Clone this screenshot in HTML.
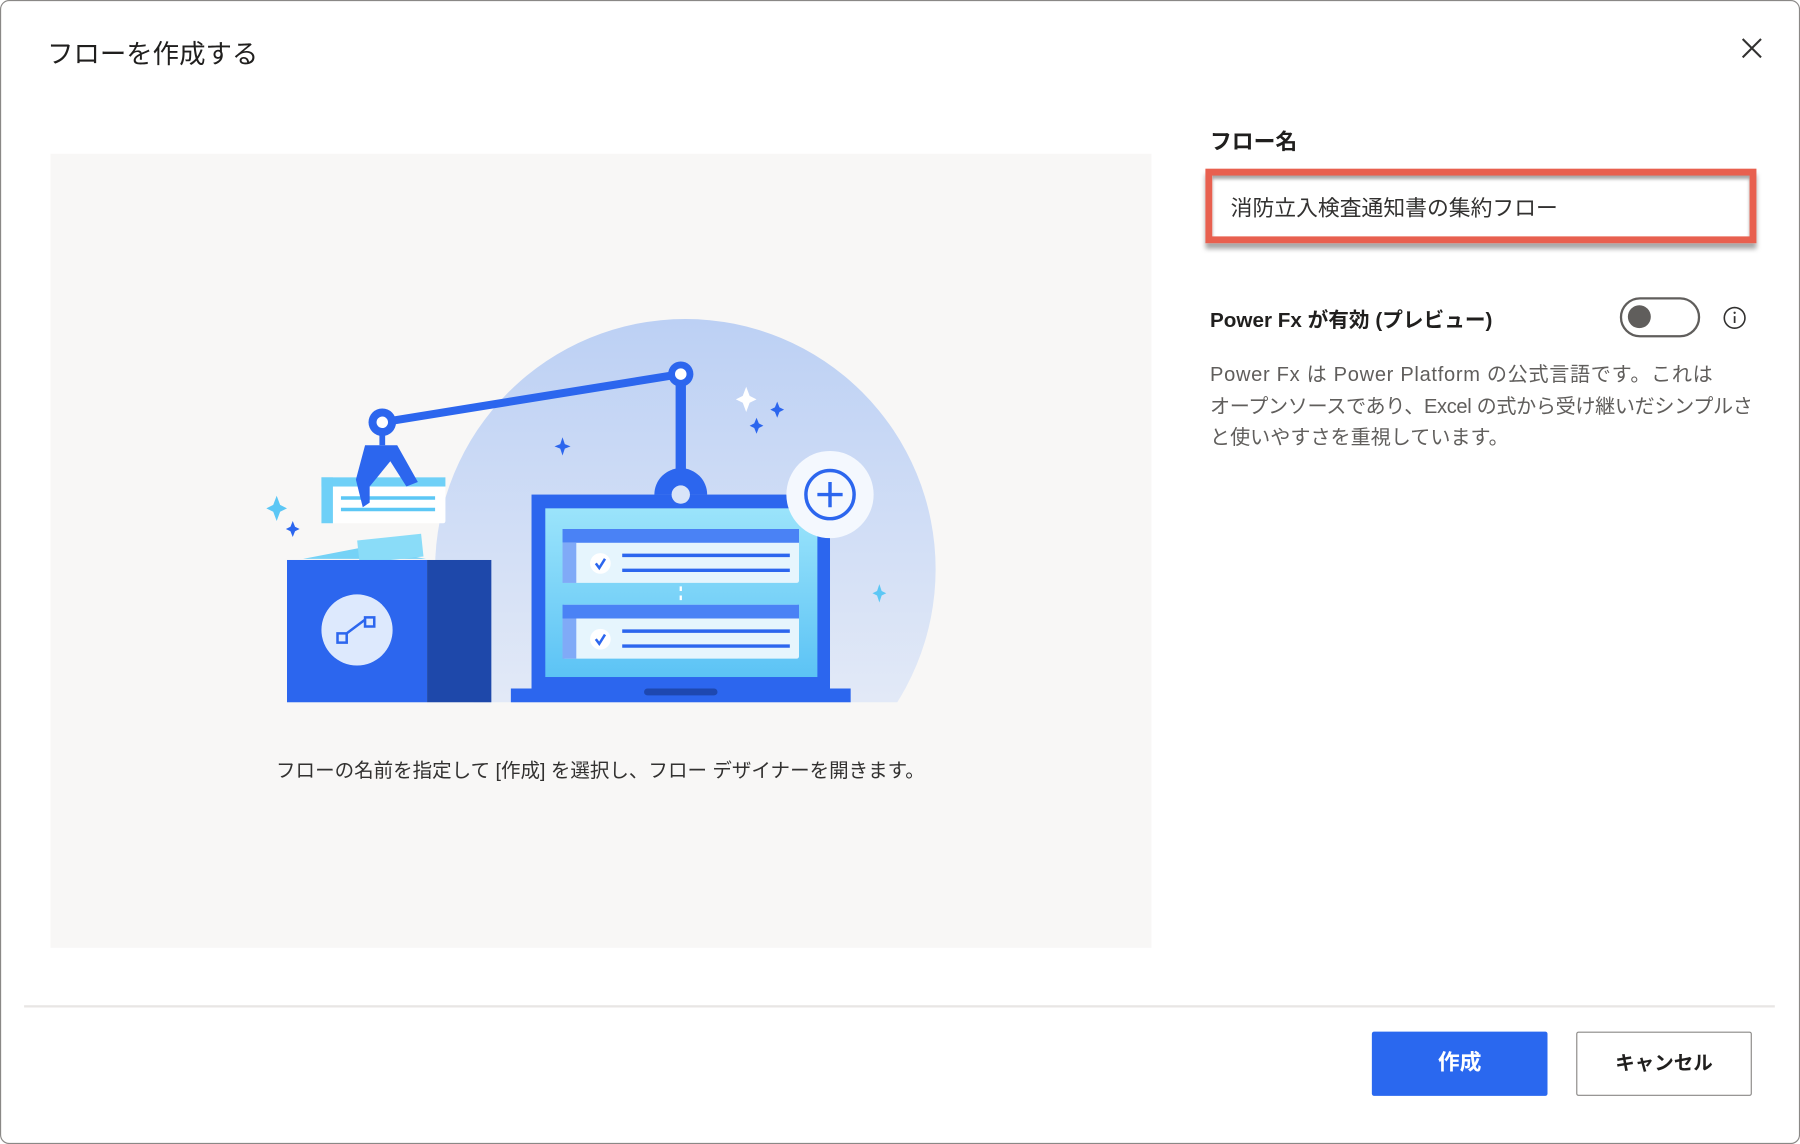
<!DOCTYPE html>
<html><head><meta charset="utf-8"><style>
html,body{margin:0;padding:0;background:#fff;overflow:hidden;width:1800px;height:1144px}
#w{position:absolute;left:0;top:0;width:1568px;height:997px;transform:scale(1.148,1.1475);transform-origin:0 0;font-family:"Liberation Sans","Noto Sans CJK JP",sans-serif;color:#323130}
.a{position:absolute;white-space:nowrap}
</style></head><body><div id="w">
<div class="a" style="left:0;top:0;width:1566px;height:995px;border:1px solid #8a8886;border-radius:8px"></div>
<div class="a" style="left:41px;top:28px;font-size:23px;color:#201f1e">フローを作成する</div>
<svg class="a" style="left:1516px;top:32px" width="20" height="20" viewBox="0 0 20 20"><path d="M2 2L18 18M18 2L2 18" stroke="#323130" stroke-width="1.8"/></svg>
<div class="a" style="left:44px;top:134px;width:959px;height:692px;background:#f8f7f6"></div>
<svg class="a" style="left:44px;top:134px" width="959" height="692" viewBox="44 134 959 692">
<defs>
<linearGradient id="g1" x1="0" y1="0" x2="0" y2="1"><stop offset="0" stop-color="#bcd0f4"/><stop offset="1" stop-color="#eef1f8"/></linearGradient>
<linearGradient id="g2" x1="0" y1="0" x2="0" y2="1"><stop offset="0" stop-color="#9be4fb"/><stop offset="1" stop-color="#5cc3f5"/></linearGradient>
<clipPath id="c"><rect x="0" y="0" width="1000" height="612"/></clipPath>
</defs>
<circle cx="597" cy="496" r="218" fill="url(#g1)" clip-path="url(#c)"/>
<rect x="463" y="431" width="260" height="172" fill="#2c66ee"/>
<rect x="475" y="443" width="237" height="147" fill="url(#g2)"/>
<rect x="445" y="600" width="296" height="12" fill="#2c66ee"/>
<rect x="561" y="600" width="64" height="6" rx="3" fill="#1e48b0"/>
<g><rect x="490" y="461" width="206" height="47" rx="2" fill="#e6f5fd"/><rect x="490" y="461" width="206" height="12" fill="#4a82f5"/><rect x="490" y="473" width="12" height="35" fill="#80aaf7"/><circle cx="523" cy="491" r="9" fill="#fff"/><path d="M519 491l3 4 5-8" stroke="#2c66ee" stroke-width="2.2" fill="none"/><path d="M542 484h146M542 497h146" stroke="#2c66ee" stroke-width="3"/></g>
<g><rect x="490" y="527" width="206" height="47" rx="2" fill="#e6f5fd"/><rect x="490" y="527" width="206" height="12" fill="#4a82f5"/><rect x="490" y="539" width="12" height="35" fill="#80aaf7"/><circle cx="523" cy="557" r="9" fill="#fff"/><path d="M519 557l3 4 5-8" stroke="#2c66ee" stroke-width="2.2" fill="none"/><path d="M542 550h146M542 563h146" stroke="#2c66ee" stroke-width="3"/></g>
<path d="M593 511v14" stroke="#fff" stroke-width="2" stroke-dasharray="4 4"/>
<path d="M333 368L593 326" stroke="#2c66ee" stroke-width="7"/>
<path d="M593 326v100" stroke="#2c66ee" stroke-width="9"/>
<path d="M570 431a23 23 0 0 1 46 0z" fill="#2c66ee"/><circle cx="593" cy="431" r="8" fill="#d8e4f8"/>
<circle cx="593" cy="326" r="11" fill="#2c66ee"/><circle cx="593" cy="326" r="5" fill="#fff"/>
<rect x="280" y="416" width="108" height="40" rx="2" fill="#fff"/><rect x="280" y="416" width="108" height="8" fill="#6fd0f7"/><rect x="280" y="416" width="10" height="40" fill="#6fd0f7"/>
<path d="M297 434h82M297 444h82" stroke="#5cc7f5" stroke-width="3"/>
<path d="M318 388h28l18 32-10 4-14-22-18 22v14l-6 4-6-24z" fill="#2c66ee"/>
<path d="M333 376v12" stroke="#2c66ee" stroke-width="5"/>
<circle cx="333" cy="368" r="12" fill="#2c66ee"/><circle cx="333" cy="368" r="5" fill="#fff"/>
<path d="M264 487l52-10 55 10z" fill="#75d2f6"/><rect x="312" y="468" width="56" height="20" fill="#8adcf8" transform="rotate(-6 340 478)"/>
<rect x="250" y="488" width="122" height="124" fill="#2c66ee"/><rect x="372" y="488" width="56" height="124" fill="#1e48aa"/>
<circle cx="311" cy="549" r="31" fill="#dde9fd"/>
<path d="M294 552h8v8h-8zM318 538h8v8h-8zM302 552l16-12" stroke="#2c66ee" stroke-width="2.2" fill="none"/>
<circle cx="723" cy="431" r="38" fill="#f4f8fe"/><circle cx="723" cy="431" r="21" fill="none" stroke="#2c66ee" stroke-width="3"/>
<path d="M723 420v22M712 431h22" stroke="#2c66ee" stroke-width="3"/>
<g fill="#2c66ee"><path d="M490 381l2 6 5 2-5 2-2 6-2-6-5-2 5-2z"/><path d="M677 350l2 5 4 2-4 2-2 5-2-5-4-2 4-2z"/><path d="M659 364l2 5 4 2-4 2-2 5-2-5-4-2 4-2z"/><path d="M255 454l2 5 4 2-4 2-2 5-2-5-4-2 4-2z"/></g>
<path d="M650 337l3 8 6 3-6 3-3 8-3-8-6-3 6-3z" fill="#fff"/>
<g fill="#5cc7f5"><path d="M241 432l3 8 6 3-6 3-3 8-3-8-6-3 6-3z"/><path d="M766 509l2 6 4 2-4 2-2 6-2-6-4-2 4-2z"/></g>
</svg>
<div class="a" style="left:0;width:1046px;text-align:center;top:657px;font-size:17px;color:#323130">フローの名前を指定して [作成] を選択し、フロー デザイナーを開きます。</div>
<div class="a" style="left:1054px;top:109px;font-size:19px;font-weight:bold;color:#201f1e">フロー名</div>
<div class="a" style="left:1050px;top:147px;width:468px;height:53px;border:6px solid #e8604f;background:#fff;box-shadow:0 5px 4px rgba(0,0,0,.35), inset 0 3px 3px rgba(0,0,0,.35)"></div>
<div class="a" style="left:1072px;top:167px;font-size:19px;color:#323130">消防立入検査通知書の集約フロー</div>
<div class="a" style="left:1054px;top:265px;font-size:18px;font-weight:bold;color:#201f1e">Power Fx が有効 (プレビュー)</div>
<div class="a" style="left:1411px;top:259px;width:66px;height:31px;border:2px solid #605e5c;border-radius:18px;box-sizing:content-box"></div>
<div class="a" style="left:1418px;top:266px;width:20px;height:20px;border-radius:50%;background:#605e5c"></div>
<svg class="a" style="left:1500px;top:266px" width="22" height="22" viewBox="0 0 22 22"><circle cx="11" cy="11" r="9" fill="none" stroke="#323130" stroke-width="1.4"/><path d="M11 9.5v6" stroke="#323130" stroke-width="1.5"/><circle cx="11" cy="6.6" r="1" fill="#323130"/></svg>
<div class="a" style="left:1054px;top:313px;font-size:17.5px;line-height:27.5px;color:#605e5c"><span style="letter-spacing:0.6px">Power Fx は Power Platform の公式言語です。これは</span><br><span style="letter-spacing:-0.3px">オープンソースであり、Excel の式から受け継いだシンプルさ</span><br>と使いやすさを重視しています。</div>
<div class="a" style="left:21px;top:876px;width:1525px;height:2px;background:#e8e6e4"></div>
<div class="a" style="left:1195px;top:899px;width:153px;height:56px;background:#2a68ef;border-radius:2px;color:#fff;font-size:19px;font-weight:bold;text-align:center;line-height:56px">作成</div>
<div class="a" style="left:1373px;top:899px;width:151px;height:54px;border:1px solid #8a8886;border-radius:2px;color:#201f1e;font-size:17px;font-weight:bold;text-align:center;line-height:54px">キャンセル</div>
</div></body></html>
